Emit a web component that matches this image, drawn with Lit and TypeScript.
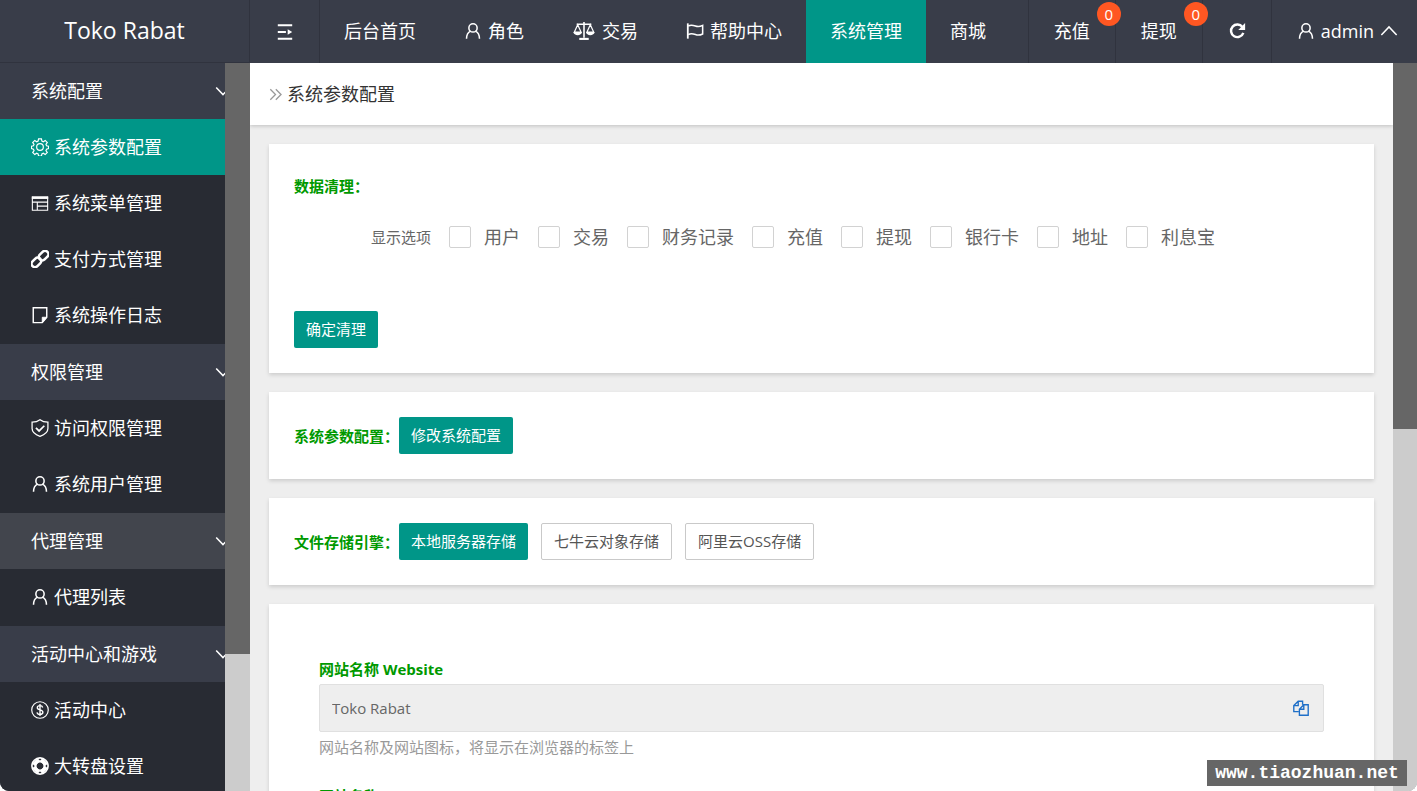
import { LitElement, html, css, svg } from "lit";
import { customElement } from "lit/decorators.js";
import { classMap } from "lit/directives/class-map.js";

const icons: Record<string, unknown> = {
  menu: svg`<path d="M2 2.500h16M2 10h9M2 17.500h16" stroke-width="2.200"/><path d="M13 7l5 3-5 3z" fill="currentColor" stroke="none"/>`,
  user: svg`<circle cx="10" cy="6.600" r="4.600"/><path d="M2.800 18.500c0-4 2-7.200 4.600-8.400M17.200 18.500c0-4-2-7.200-4.600-8.400"/>`,
  scale: svg`<path d="M10 2v15M3 4h14" stroke-width="1.500"/><path d="M5.500 18h9" stroke-width="2"/><path d="M4 4.500L.8 11.500h6.400zM16 4.500l-3.200 7h6.400z" stroke-width="1.200"/><path d="M0 11.500h8c0 4-8 4-8 0zM12 11.500h8c0 4-8 4-8 0z" fill="currentColor" stroke="none"/>`,
  flag: svg`<path d="M2 1.500v17" stroke-width="2"/><path d="M2.500 4.500c3-2 5.500-1 8 0s5 .8 8-.7v9.500c-3 1.500-5.500 1.600-8 .6s-5-1.900-8 .1"/>`,
  refresh: svg`<path d="M16 5.600A7 7 0 1 0 17 12" stroke-width="2.700"/><path d="M19 1.200v7.600h-7.600z" fill="currentColor" stroke="none"/>`,
  up: svg`<path d="M1.500 14.500L10 5.500l8.500 9"/>`,
  down: svg`<path d="M1.500 5.500L10 14.500l8.500-9" stroke-width="1.900"/>`,
  gear: svg`<circle cx="10" cy="10" r="3.700" stroke-width="1.300"/><path d="M8.400 1h3.200l.5 2.500 1.600.7 2.100-1.500 2.300 2.300-1.500 2.100.7 1.600 2.200.5v2.600l-2.200.6-.7 1.600 1.500 2.100-2.300 2.300-2.100-1.500-1.600.7-.5 2.400H8.400l-.5-2.400-1.600-.7-2.100 1.500-2.300-2.300 1.500-2.100-.7-1.600L.5 11.800V9.200l2.200-.5.7-1.600L1.900 5l2.300-2.300 2.100 1.500 1.600-.7z" stroke-width="1.300"/>`,
  layout: svg`<path d="M1.500 3v15h17V3M1.500 9h17M7 9v9M7 13.500h11.500" stroke-width="1.200"/><path d="M.9 2.500h18.200v3H.9z" fill="currentColor" stroke="none"/>`,
  link: svg`<g transform="rotate(-45 10 10)" stroke-width="2.800"><rect x="-1.500" y="6" width="12" height="7.600" rx="3.800"/><rect x="9.500" y="6.400" width="12" height="7.600" rx="3.800"/></g>`,
  note: svg`<path d="M2.500 2h15v10.500l-5 6h-10z" stroke-width="1.600"/><path d="M17.500 12.500h-5v6z" fill="currentColor" stroke-width="1"/>`,
  shield: svg`<path d="M10 .8c2.300 1.800 5.300 2.700 8.800 2.700v7c0 4-4 7-8.800 8.800C5.200 17.500 1.200 14.500 1.200 10.500v-7C4.700 3.500 7.700 2.600 10 .8z" stroke-width="1.400"/><path d="M5.500 9.800l3.500 3.500 5.800-5.800" stroke-width="1.900"/>`,
  dollar: svg`<circle cx="10" cy="10" r="9.200" stroke-width="1.300"/><path d="M13 7.200c-.4-1.400-1.500-2-3-2-1.700 0-3 .8-3 2.300 0 3.200 6.200 1.600 6.200 5 0 1.500-1.300 2.400-3.200 2.400-1.800 0-3-.8-3.300-2.300M10 3.400v13.200" stroke-width="1.500"/>`,
  ring: svg`<circle cx="10" cy="10" r="9" stroke-width="1.800"/><circle cx="10" cy="10" r="4.700" stroke-width="1.800"/><path d="M5.800 1.800h8.400v4.500H5.800zM5.800 13.700h8.400v4.500H5.800zM1.800 5.800h4.500v8.400H1.800zM13.700 5.800h4.500v8.400h-4.500z" fill="currentColor" stroke="none" transform="rotate(45 10 10)"/>`,
  angles: svg`<path d="M2 2l8 8-8 8M10.500 2l8 8-8 8" stroke-width="2"/>`,
  copy: svg`<path d="M7 14.500H1V7l5.500-5.500H12V6M6.500 1.500V7H1M8 11.500L13.500 6H19v13H8zM13.500 6v5.500H8" stroke-width="1.700"/>`,
};

const icon = (name: string) =>
  html`<svg class="icon" viewBox="0 0 20 20" aria-hidden="true">${icons[name]}</svg>`;

interface NavItem { text: string; icon?: string; active?: boolean }
interface Group { text: string; hover?: boolean; items: NavItem[] }

const topNav: NavItem[] = [
  { text: "后台首页" },
  { text: "角色", icon: "user" },
  { text: "交易", icon: "scale" },
  { text: "帮助中心", icon: "flag" },
  { text: "系统管理", active: true },
  { text: "商城" },
];

const groups: Group[] = [
  { text: "系统配置", items: [
    { text: "系统参数配置", icon: "gear", active: true },
    { text: "系统菜单管理", icon: "layout" },
    { text: "支付方式管理", icon: "link" },
    { text: "系统操作日志", icon: "note" },
  ] },
  { text: "权限管理", items: [
    { text: "访问权限管理", icon: "shield" },
    { text: "系统用户管理", icon: "user" },
  ] },
  { text: "代理管理", hover: true, items: [{ text: "代理列表", icon: "user" }] },
  { text: "活动中心和游戏", items: [
    { text: "活动中心", icon: "dollar" },
    { text: "大转盘设置", icon: "ring" },
  ] },
];

const cleanOptions = ["用户", "交易", "财务记录", "充值", "提现", "银行卡", "地址", "利息宝"];

@customElement("app-root")
export class AppRoot extends LitElement {
  static styles = css`
    :host {
      display: flex;
      flex-direction: column;
      height: 100vh;
      overflow: hidden;
      position: relative;
      border-radius: 0 0 9px 9px;
      background: #393d49;
      color: #666;
      font: 15px/24px "Open Sans", "Noto Sans CJK SC", sans-serif;
    }
    *, *::before, *::after { box-sizing: border-box; }
    a { color: inherit; text-decoration: none; }
    button { font: inherit; cursor: pointer; }
    .icon {
      flex: none;
      width: 18px;
      height: 18px;
      fill: none;
      stroke: currentColor;
      stroke-width: 1.7;
    }
    .header {
      display: flex;
      flex: none;
      height: 63px;
      color: #fff;
      font-size: 18px;
    }
    .logo {
      display: flex;
      align-items: center;
      justify-content: center;
      width: 250px;
      padding-bottom: 2px;
      border-right: 1px solid #30333e;
      border-bottom: 1px solid #30333e;
      font-size: 23px;
    }
    .toggle {
      display: flex;
      align-items: center;
      justify-content: center;
      width: 70px;
      padding: 0;
      border: 0;
      border-right: 1px solid #30333e;
      background: none;
      color: inherit;
    }
    .nav { display: flex; flex: 1; }
    .nav-item {
      display: flex;
      align-items: center;
      gap: 6px;
      padding: 0 24px 2px;
      position: relative;
      white-space: nowrap;
    }
    .nav-item.active { background: #009688; }
    .nav-item.wide .icon { width: 24px; height: 21px; }
    .tools { display: flex; }
    .tools .nav-item { padding: 0 25px 2px; border-left: 1px solid #30333e; }
    .tools .account { padding-right: 19px; }
    .badge {
      position: absolute;
      top: 2px;
      right: -6px;
      z-index: 1;
      width: 24px;
      height: 24px;
      border-radius: 50%;
      background: #ff5722;
      font-size: 15px;
      line-height: 24px;
      text-align: center;
    }
    .body { display: flex; flex: 1; min-height: 0; }
    .side { display: flex; width: 250px; flex: none; overflow: hidden; }
    .menu {
      flex: 1;
      min-width: 0;
      overflow: hidden;
      background: #282b33;
      color: #fff;
      font-size: 18px;
    }
    .group { padding-bottom: 1px; }
    .group-head, .menu-item {
      display: flex;
      align-items: center;
      height: 56px;
      padding-left: 31px;
      white-space: nowrap;
    }
    .group-head {
      justify-content: space-between;
      width: 231px;
      background: #393d49;
    }
    .group-head.hover { background: #42454d; }
    .group-head .icon { width: 16px; height: 16px; }
    .menu-item { gap: 5px; }
    .menu-item.active { background: #009688; }
    .bar { flex: none; width: 25px; background: #ccc; }
    .thumb { background: #666; }
    .side .thumb { height: 81.2%; }
    .content .bar { width: 24px; }
    .content .thumb { height: 50.3%; }
    .content { display: flex; flex: 1; min-width: 0; background: #eee; }
    .page { flex: 1; min-width: 0; overflow: hidden; }
    .crumb {
      display: flex;
      align-items: center;
      gap: 5px;
      height: 62px;
      padding: 0 19px;
      margin: 0;
      background: #fff;
      box-shadow: 0 1px 4px rgba(0, 0, 0, 0.2);
      color: #333;
      font-size: 18px;
      font-weight: 400;
    }
    .crumb .icon { width: 13px; height: 13px; color: #999; }
    .cards { display: flex; flex-direction: column; gap: 19px; padding: 19px; }
    .card { padding: 25px; background: #fff; box-shadow: 0 2px 4px rgba(0, 0, 0, 0.14); }
    .title { margin: 0; color: #090; font-size: 15px; font-weight: 700; line-height: 34px; white-space: nowrap; }
    .options {
      display: flex;
      flex-wrap: wrap;
      gap: 18px;
      align-items: center;
      min-height: 38px;
      margin: 15px 0 55px 77px;
    }
    .option { display: flex; align-items: center; gap: 13px; font-size: 18px; }
    .check {
      appearance: none;
      width: 22px;
      height: 22px;
      margin: 0;
      border: 1px solid #d2d2d2;
      border-radius: 2px;
      background: #fff;
    }
    .line { display: flex; align-items: center; }
    .btn {
      height: 37px;
      padding: 0 12px 2px;
      border: 0;
      border-radius: 2px;
      background: #009688;
      color: #fff;
      white-space: nowrap;
    }
    .btn.plain { border: 1px solid #c9c9c9; background: #fff; color: #555; }
    .btns { display: flex; gap: 13px; }
    .form { padding: 50px; }
    .field { display: flex; flex-direction: column; margin-bottom: 22px; }
    .label { color: #090; font-weight: 700; line-height: 30px; }
    .box {
      display: flex;
      align-items: center;
      height: 48px;
      padding: 0 14px 0 12px;
      border: 1px solid #e0e0e0;
      border-radius: 2px;
      background: #eee;
    }
    .input {
      flex: 1;
      min-width: 0;
      padding: 0;
      border: 0;
      outline: 0;
      background: none;
      color: #666;
      font: inherit;
    }
    .copy { display: flex; padding: 0; border: 0; background: none; color: #1e6fc8; }
    .copy .icon { width: 16px; height: 16px; }
    .hint { margin: 0; padding-top: 3px; color: #999; }
    .mark {
      position: absolute;
      right: 10px;
      bottom: 5px;
      width: 200px;
      background: #666;
      color: #fff;
      font: 700 18px/26px "Liberation Mono", monospace;
      text-align: center;
    }
  `;

  private field(id: string, label: string, value: string, hint: string) {
    return html`<div class="field">
      <label class="label" for=${id}>${label}</label>
      <div class="box">
        <input class="input" id=${id} readonly .value=${value} />
        <button class="copy" aria-label="复制">${icon("copy")}</button>
      </div>
      <p class="hint">${hint}</p>
    </div>`;
  }

  render() {
    return html`
      <header class="header">
        <a class="logo" href="#">Toko Rabat</a>
        <button class="toggle" aria-label="菜单">${icon("menu")}</button>
        <nav class="nav">
          ${topNav.map((n) => html`<a href="#" class=${classMap({ "nav-item": true, active: !!n.active, wide: n.icon === "scale" })}>${n.icon ? icon(n.icon) : ""}${n.text}</a>`)}
        </nav>
        <div class="tools">
          <a class="nav-item" href="#">充值<span class="badge">0</span></a>
          <a class="nav-item" href="#">提现<span class="badge">0</span></a>
          <a class="nav-item" href="#" aria-label="刷新">${icon("refresh")}</a>
          <a class="nav-item account" href="#">${icon("user")}<span>admin</span>${icon("up")}</a>
        </div>
      </header>
      <div class="body">
        <aside class="side">
          <nav class="menu">
            ${groups.map((g) => html`<div class="group">
              <a href="#" class=${classMap({ "group-head": true, hover: !!g.hover })}>${g.text}${icon("down")}</a>
              ${g.items.map((i) => html`<a href="#" class=${classMap({ "menu-item": true, active: !!i.active })}>${icon(i.icon!)}${i.text}</a>`)}
            </div>`)}
          </nav>
          <div class="bar"><div class="thumb"></div></div>
        </aside>
        <div class="content">
          <main class="page">
            <h1 class="crumb">${icon("angles")}系统参数配置</h1>
            <div class="cards">
              <section class="card">
                <h2 class="title">数据清理：</h2>
                <div class="options">
                  <span>显示选项</span>
                  ${cleanOptions.map((o) => html`<label class="option"><input class="check" type="checkbox" />${o}</label>`)}
                </div>
                <button class="btn">确定清理</button>
              </section>
              <section class="card line">
                <h2 class="title">系统参数配置：</h2>
                <button class="btn">修改系统配置</button>
              </section>
              <section class="card line">
                <h2 class="title">文件存储引擎：</h2>
                <div class="btns">
                  <button class="btn">本地服务器存储</button>
                  <button class="btn plain">七牛云对象存储</button>
                  <button class="btn plain">阿里云OSS存储</button>
                </div>
              </section>
              <section class="card form">
                ${this.field("site", "网站名称 Website", "Toko Rabat", "网站名称及网站图标，将显示在浏览器的标签上")}
                ${this.field("site2", "网站名称 website", "Toko Rabat", "")}
              </section>
            </div>
          </main>
          <div class="bar"><div class="thumb"></div></div>
        </div>
      </div>
      <div class="mark">www.tiaozhuan.net</div>
    `;
  }
}
